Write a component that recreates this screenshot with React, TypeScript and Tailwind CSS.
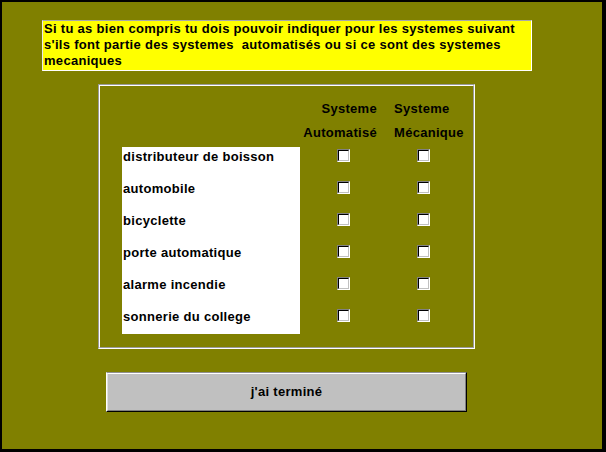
import React from 'react';

const items = [
  'distributeur de boisson',
  'automobile',
  'bicyclette',
  'porte automatique',
  'alarme incendie',
  'sonnerie du college',
];

function Checkbox() {
  // classic 3D sunken checkbox
  return (
    <div className="w-[13px] h-[13px] border border-t-[#808080] border-l-[#808080] border-b-white border-r-white">
      <div className="w-full h-full bg-white border border-t-black border-l-black border-b-[#c0c0c0] border-r-[#c0c0c0]" />
    </div>
  );
}

export default function App() {
  return (
    <div className="w-[606px] h-[452px] bg-black pt-[2px] pl-[2px] font-['Liberation_Sans',Arial,sans-serif] font-bold text-[13px] tracking-[0.3px] text-black">
      <div className="w-[600px] h-[447px] bg-[#808000] flex flex-col items-start">
        {/* consigne */}
        <div className="ml-[40px] mt-[18px] w-[490px] h-[51px] bg-[#ffff00] border border-t-[#a8a8a8] border-l-[#e8e8e8] border-b-white border-r-white pl-[1px] leading-[16px]">
          Si tu as bien compris tu dois pouvoir indiquer pour les systemes suivant s'ils font partie des systemes&nbsp; automatisés ou si ce sont des systemes mecaniques
        </div>

        {/* tableau */}
        <div className="ml-[96px] mt-[13px] w-[377px] h-[265px] border border-t-[#9a9a9a] border-l-[#9a9a9a] border-b-white border-r-white">
          <div className="w-full h-full border border-t-white border-l-white border-b-[#9a9a9a] border-r-[#9a9a9a] pl-[22px] pt-[11px]">
            <div className="flex">
              <div className="w-[177px]" />
              <div className="w-[78px] text-right leading-[24px]">
                <div>Systeme</div>
                <div>Automatisé</div>
              </div>
              <div className="ml-[17px] leading-[24px]">
                <div>Systeme</div>
                <div>Mécanique</div>
              </div>
            </div>
            <div className="flex mt-[2px]">
              <div className="w-[178px] h-[187px] bg-white overflow-hidden">
                {items.map((t) => (
                  <div key={t} className="h-[32px] pt-[2px] pl-[1px] leading-[16px]">
                    {t}
                  </div>
                ))}
              </div>
              <div>
                {items.map((t) => (
                  <div key={t} className="h-[32px] pt-[2px] pl-[37px] flex gap-[67px]">
                    <Checkbox />
                    <Checkbox />
                  </div>
                ))}
              </div>
            </div>
          </div>
        </div>

        {/* bouton */}
        <button className="ml-[104px] mt-[23px] w-[361px] h-[40px] bg-[#c0c0c0] border border-t-[#909090] border-l-white border-b-black border-r-black">
          <div className="w-full h-full flex items-center justify-center border border-t-white border-l-[#e0e0e0] border-b-[#808080] border-r-[#808080]">
            j'ai terminé
          </div>
        </button>
      </div>
    </div>
  );
}
